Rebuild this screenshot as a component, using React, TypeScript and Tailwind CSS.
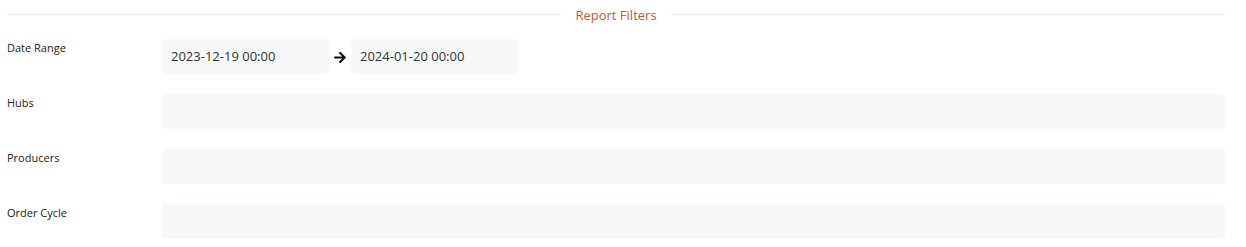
import React from "react";

function Label({ children }: { children: React.ReactNode }) {
  return (
    <div className="w-[155px] shrink-0 pt-[1px] text-[11px] leading-[16px] text-[#222]">
      {children}
    </div>
  );
}

export default function App() {
  return (
    <div
      className="bg-white w-[1246px] h-[247px] pl-[7px] pr-[21px]"
      style={{ fontFamily: '"Open Sans", "Noto Sans", sans-serif' }}
    >
      <div className="flex items-center h-[29px]">
        <div className="flex-1 h-px bg-[#ececec]" />
        <span className="px-[14px] text-[13px] leading-[18px] text-[#c5593a]">
          Report Filters
        </span>
        <div className="flex-1 h-px bg-[#ececec]" />
      </div>

      <div className="mt-[10px] flex flex-col gap-[20px]">
        <div className="flex">
          <Label>Date Range</Label>
          <div className="flex items-center">
            <div className="w-[167px] h-[35px] rounded-[3px] bg-[#f7f8fa] flex items-center pl-[9px] pt-[1px] text-[13px] text-[#333]">
              2023-12-19 00:00
            </div>
            <div className="w-[22px] flex items-center justify-center">
              <svg width="12" height="11" viewBox="0 0 448 420" className="mt-[1px]">
                <path
                  fill="#111"
                  d="M190.5 46.9l22.2-22.2c9.4-9.4 24.6-9.4 33.9 0L441 219c9.4 9.4 9.4 24.6 0 33.9L246.6 447.3c-9.4 9.4-24.6 9.4-33.9 0l-22.2-22.2c-9.5-9.5-9.300-25 .4-34.3L311.4 276H24c-13.3 0-24-10.7-24-24v-32c0-13.3 10.7-24 24-24h287.4L190.9 81.2c-9.8-9.3-10-24.8-.4-34.3z"
                  transform="translate(0,-26)"
                />
              </svg>
            </div>
            <div className="w-[167px] h-[35px] rounded-[3px] bg-[#f7f8fa] flex items-center pl-[9px] pt-[1px] text-[13px] text-[#333]">
              2024-01-20 00:00
            </div>
          </div>
        </div>

        <div className="flex">
          <Label>Hubs</Label>
          <div className="flex-1 h-[35px] rounded-[3px] bg-[#f7f8fa]" />
        </div>

        <div className="flex">
          <Label>Producers</Label>
          <div className="flex-1 h-[35px] rounded-[3px] bg-[#f7f8fa]" />
        </div>

        <div className="flex">
          <Label>Order Cycle</Label>
          <div className="flex-1 h-[35px] rounded-[3px] bg-[#f7f8fa]" />
        </div>
      </div>
    </div>
  );
}
